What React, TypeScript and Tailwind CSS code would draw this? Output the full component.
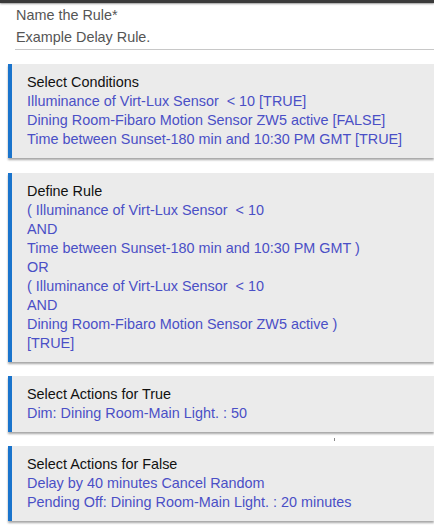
const cards: { title: string; lines: string[] }[] = [
  {
    title: 'Select Conditions',
    lines: [
      'Illuminance of Virt-Lux Sensor  < 10 [TRUE]',
      'Dining Room-Fibaro Motion Sensor ZW5 active [FALSE]',
      'Time between Sunset-180 min and 10:30 PM GMT [TRUE]',
    ],
  },
  {
    title: 'Define Rule',
    lines: [
      '( Illuminance of Virt-Lux Sensor  < 10',
      'AND',
      'Time between Sunset-180 min and 10:30 PM GMT )',
      'OR',
      '( Illuminance of Virt-Lux Sensor  < 10',
      'AND',
      'Dining Room-Fibaro Motion Sensor ZW5 active )',
      '[TRUE]',
    ],
  },
  {
    title: 'Select Actions for True',
    lines: ['Dim: Dining Room-Main Light. : 50'],
  },
  {
    title: 'Select Actions for False',
    lines: ['Delay by 40 minutes Cancel Random', 'Pending Off: Dining Room-Main Light. : 20 minutes'],
  },
]

function Card({ title, lines }: { title: string; lines: string[] }) {
  return (
    <div className="ml-2 border-l-4 border-[#1a74cc] bg-[#ebebeb] pl-[15px] pt-[8.5px] pb-[9.5px] shadow-[0_2px_2px_rgba(0,0,0,0.35)]">
      <div className="text-[#111]">{title}</div>
      {lines.map((l, i) => (
        <div key={i} className="whitespace-pre text-[#4a4fc6]">
          {l}
        </div>
      ))}
    </div>
  )
}

export default function App() {
  return (
    <div className="min-h-[527px] bg-white text-[14.4px] leading-[19px]" style={{ fontFamily: '"Liberation Sans", Arial, sans-serif' }}>
      {/* top bar */}
      <div className="h-[3px] bg-[#3a3a3a] shadow-[0_1px_2px_rgba(0,0,0,0.4)]" />

      {/* rule name */}
      <div className="pl-[15px] pt-[3px]">
        <div className="pl-px text-[#555]">Name the Rule*</div>
        <div className="mt-[3px] border-b border-[#c8c8c8] pb-[2px] pl-px text-[#555]">Example Delay Rule.</div>
      </div>

      <div className="flex flex-col pt-[14px]">
        <Card {...cards[0]} />
        <div className="h-[15px]" />
        <Card {...cards[1]} />
        <div className="h-[14px]" />
        <Card {...cards[2]} />
        <div className="h-[14px] pl-[334px] pt-[6px]">
          <div className="h-[3px] w-px bg-[#888]" />
        </div>
        <Card {...cards[3]} />
      </div>
    </div>
  )
}
